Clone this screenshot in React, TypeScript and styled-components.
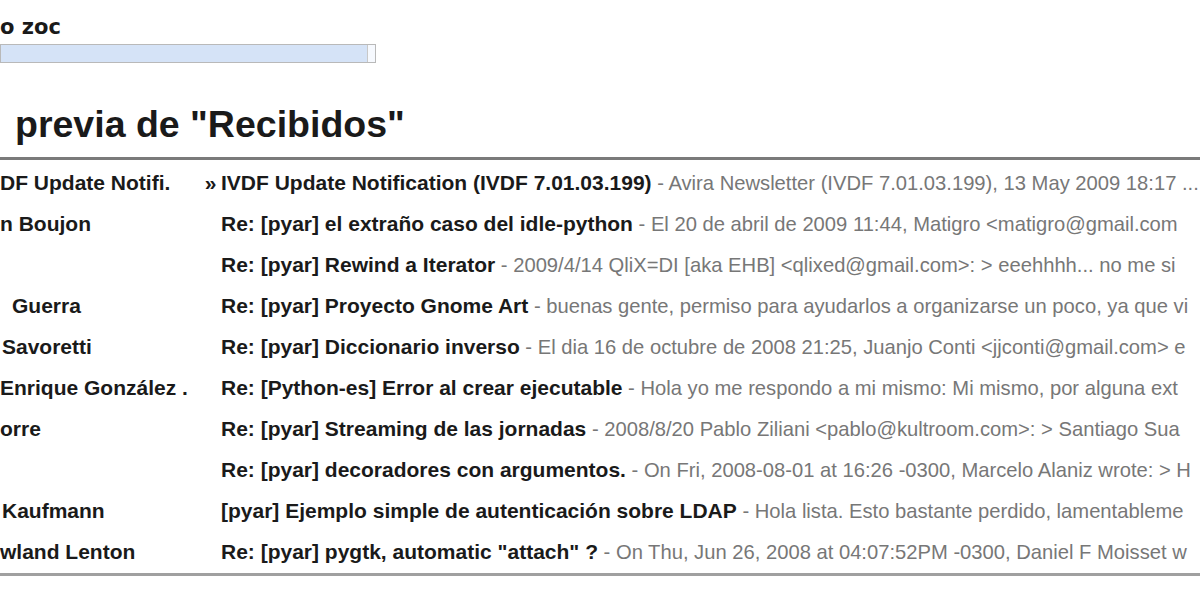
import React from "react";
import styled, { createGlobalStyle } from "styled-components";

const Global = createGlobalStyle`
  html, body { margin: 0; padding: 0; background: #ffffff; }
  body { font-family: "Liberation Sans", Arial, sans-serif; color: #111; }
`;

const Page = styled.div`
  width: 1200px;
  height: 600px;
  overflow: hidden;
  display: flex;
  flex-direction: column;
`;

const ZoomSection = styled.div`
  display: flex;
  flex-direction: column;
  gap: 6px;
  padding-top: 16px;
`;

const ZoomLabel = styled.div`
  font-family: "DejaVu Sans", Verdana, sans-serif;
  font-weight: bold;
  font-size: 21px;
  line-height: 22px;
  color: #1a1a1a;
`;

const Bar = styled.div`
  width: 374px;
  height: 17px;
  border: 1px solid #b9b9b9;
  background: #d5e3f7;
  display: flex;
  justify-content: flex-end;
`;

const BarEnd = styled.div`
  width: 7px;
  height: 100%;
  background: #f6f9fe;
  border-left: 1px solid #c8c8c8;
`;

const Title = styled.h1`
  margin: 39px 0 0 15px;
  font-family: "Liberation Sans", Arial, sans-serif;
  font-size: 37.5px;
  font-weight: bold;
  line-height: 44px;
  color: #1a1a1a;
`;

const Table = styled.div`
  margin-top: 11px;
  border-top: 3px solid #7a7a7a;
  border-bottom: 3px solid #a0a0a0;
  padding-top: 2px;
  display: flex;
  flex-direction: column;
`;

const Row = styled.div`
  height: 41.1px;
  display: grid;
  grid-template-columns: 200px 1fr;
  align-items: center;
  white-space: nowrap;
  overflow: hidden;
  font-size: 21px;
`;

const Sender = styled.div<{ $indent?: number }>`
  font-weight: bold;
  color: #1a1a1a;
  padding-left: ${(p) => p.$indent ?? 0}px;
  overflow: hidden;
`;

const SubjectCell = styled.div<{ $marker?: boolean }>`
  overflow: hidden;
  padding-left: ${(p) => (p.$marker ? 0 : 21)}px;
`;

const Marker = styled.span`
  display: inline-block;
  width: 21px;
  font-weight: bold;
  color: #1a1a1a;
  text-align: center;
`;

const Subject = styled.span`
  font-weight: bold;
  color: #1a1a1a;
`;

const Snippet = styled.span`
  color: #777777;
  font-size: 20.2px;
`;

type Mail = { sender: string; indent?: number; marker?: boolean; subject: string; snippet: string };

const mails: Mail[] = [
  { sender: "DF Update Notifi.", marker: true, subject: "IVDF Update Notification (IVDF 7.01.03.199)", snippet: "Avira Newsletter (IVDF 7.01.03.199), 13 May 2009 18:17 ..." },
  { sender: "n Boujon", subject: "Re: [pyar] el extraño caso del idle-python", snippet: "El 20 de abril de 2009 11:44, Matigro <matigro@gmail.com" },
  { sender: "", subject: "Re: [pyar] Rewind a Iterator", snippet: "2009/4/14 QliX=DI [aka EHB] <qlixed@gmail.com>: > eeehhhh... no me si" },
  { sender: "Guerra", indent: 12, subject: "Re: [pyar] Proyecto Gnome Art", snippet: "buenas gente, permiso para ayudarlos a organizarse un poco, ya que vi" },
  { sender: "Savoretti", indent: 2, subject: "Re: [pyar] Diccionario inverso", snippet: "El dia 16 de octubre de 2008 21:25, Juanjo Conti <jjconti@gmail.com> e" },
  { sender: "Enrique González .", subject: "Re: [Python-es] Error al crear ejecutable", snippet: "Hola yo me respondo a mi mismo: Mi mismo, por alguna ext" },
  { sender: "orre", subject: "Re: [pyar] Streaming de las jornadas", snippet: "2008/8/20 Pablo Ziliani <pablo@kultroom.com>: > Santiago Sua" },
  { sender: "", subject: "Re: [pyar] decoradores con argumentos.", snippet: "On Fri, 2008-08-01 at 16:26 -0300, Marcelo Alaniz wrote: > H" },
  { sender: "Kaufmann", indent: 2, subject: "[pyar] Ejemplo simple de autenticación sobre LDAP", snippet: "Hola lista. Esto bastante perdido, lamentableme" },
  { sender: "wland Lenton", subject: "Re: [pyar] pygtk, automatic \"attach\" ?", snippet: "On Thu, Jun 26, 2008 at 04:07:52PM -0300, Daniel F Moisset w" },
];

export default function App() {
  return (
    <>
      <Global />
      <Page>
        <ZoomSection>
          <ZoomLabel>o zoc</ZoomLabel>
          <Bar>
            <BarEnd />
          </Bar>
        </ZoomSection>
        <Title>previa de "Recibidos"</Title>
        <Table>
          {mails.map((m, i) => (
            <Row key={i}>
              <Sender $indent={m.indent}>{m.sender}</Sender>
              <SubjectCell $marker={m.marker}>
                {m.marker && <Marker>»</Marker>}
                <Subject>{m.subject}</Subject>
                <Snippet> - {m.snippet}</Snippet>
              </SubjectCell>
            </Row>
          ))}
        </Table>
      </Page>
    </>
  );
}
